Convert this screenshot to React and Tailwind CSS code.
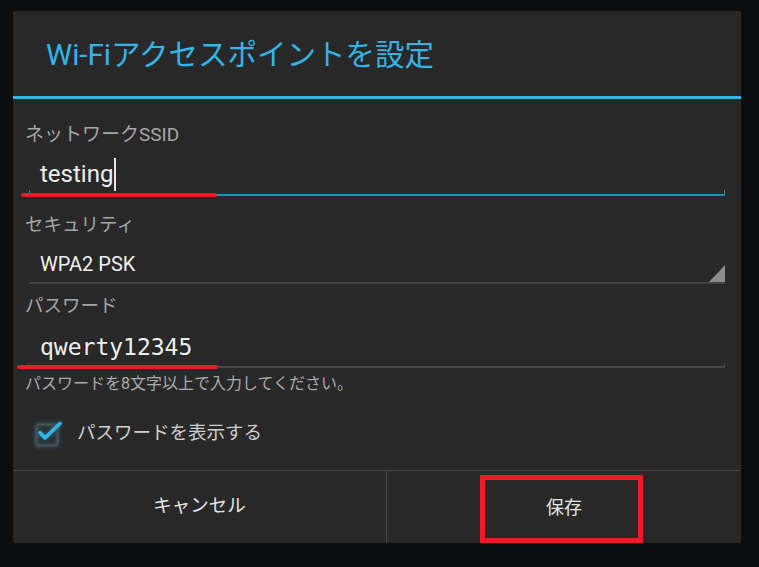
export default function App() {
  return (
    <div className="min-h-[567px] bg-[#0b0c0e] pt-[11px] pl-[13px] font-[Roboto,'Noto_Sans_CJK_JP',sans-serif]">
      <div className="w-[728px] h-[532px] bg-[#282828] rounded-[2px] flex flex-col">
        {/* Title */}
        <div className="h-[85px] flex items-center pt-[3px] pl-[33px] text-[29.5px] text-[#33b5e5]">
          Wi-Fiアクセスポイントを設定
        </div>
        <div className="h-[3px] bg-[#33b5e5]" />

        <div className="px-[12px]">
          {/* SSID */}
          <div className="mt-[25px] h-[22px] leading-[22px] text-[19px] text-[#a6a6a6]">
            ネットワークSSID
          </div>
          <div className="relative">
            <div className="h-[44px] pt-[12px] flex items-center pl-[15px] text-[24px] text-[#efefef]">
              testing
              <span className="inline-block w-[1.5px] h-[33px] bg-[#e6e6e6] ml-[1px]" />
            </div>
            <div className="mx-[4px] h-[6px] border-x-[1.5px] border-b-2 border-[#1c8fbf]" />
            <div className="absolute left-[-4px] bottom-[-1px] w-[196px] h-[4px] rounded-full bg-[#ed1c24]" />
          </div>

          {/* Security */}
          <div className="mt-[18px] h-[22px] leading-[22px] text-[18.5px] text-[#a6a6a6]">
            セキュリティ
          </div>
          <div className="mx-[4px] h-[46px] pt-[10px] pl-[11px] flex justify-between">
            <span className="self-center text-[20px] text-[#efefef]">WPA2 PSK</span>
            <svg width="16" height="17" viewBox="0 0 16 17" className="self-end">
              <polygon points="16,0 16,17 0,17" fill="#8c8c8c" />
            </svg>
          </div>
          <div className="mx-[4px] h-[2px] bg-[#414141]" />

          {/* Password */}
          <div className="mt-[11px] h-[22px] leading-[22px] text-[18.5px] text-[#a6a6a6]">
            パスワード
          </div>
          <div className="relative">
            <div className="h-[46px] pt-[14px] flex items-center pl-[15px] text-[23px] text-[#efefef] font-['DejaVu_Sans_Mono',monospace]">
              qwerty12345
            </div>
            <div className="mx-[4px] h-[5px] border-x border-b-2 border-[#4a4a4a]" />
            <div className="absolute left-[-8px] bottom-[-1px] w-[201px] h-[4px] rounded-full bg-[#ed1c24]" />
          </div>
          <div className="mt-[7px] h-[18px] leading-[18px] text-[16px] text-[#ababab]">
            パスワードを8文字以上で入力してください。
          </div>

          {/* Show password */}
          <div className="mt-[21px] h-[40px] flex items-center pl-[10px]">
            <svg width="27" height="27" viewBox="0 0 27 27" className="-mt-[2px] drop-shadow-[0_0_2px_rgba(51,181,229,0.6)]">
              <rect x="1.5" y="4.5" width="21" height="21" rx="2" fill="none" stroke="#4f4f4f" strokeWidth="2" />
              <path d="M5 12.5 L10 18 L25 3.5" fill="none" stroke="#33b5e5" strokeWidth="3.5" strokeLinecap="round" strokeLinejoin="round" />
            </svg>
            <span className="ml-[15px] text-[18.5px] text-[#cfcfcf]">パスワードを表示する</span>
          </div>
        </div>

        {/* Buttons */}
        <div className="mt-auto h-[73px] border-t border-[#464646] grid grid-cols-[374px_1fr]">
          <div className="border-r border-[#464646] flex items-center justify-center text-[18.5px] text-[#e4e4e4]">
            キャンセル
          </div>
          <div className="relative flex items-center justify-center text-[18px] text-[#e4e4e4]">
            保存
            <div className="absolute left-[93px] top-[4px] w-[163px] h-[68px] border-[5px] border-[#ed1c24]" />
          </div>
        </div>
      </div>
    </div>
  );
}
